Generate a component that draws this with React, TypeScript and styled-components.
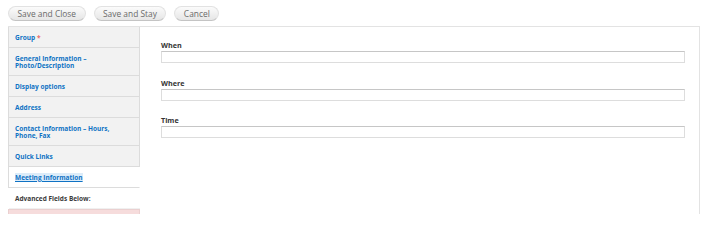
import React from 'react';
import styled, { createGlobalStyle } from 'styled-components';

const GlobalStyle = createGlobalStyle`
  html, body {
    margin: 0;
    padding: 0;
    background: #ffffff;
  }
  body {
    font-family: 'Open Sans', 'DejaVu Sans', sans-serif;
    color: #333333;
  }
`;

const Page = styled.div`
  padding: 6px 8px 0 8px;
  width: 708px;
  box-sizing: border-box;
`;

const Actions = styled.div`
  display: flex;
  gap: 8px;
  height: 15px;
  margin-bottom: 5px;
`;

const Button = styled.button`
  height: 15px;
  padding: 0 8.5px;
  border: 1px solid #e2e2e2;
  border-bottom-color: #c4c4c4;
  border-radius: 10px;
  background: linear-gradient(#fbfbfb, #e6e6e6);
  color: #6a6a6a;
  font-family: 'Open Sans', 'DejaVu Sans', sans-serif;
  font-size: 8.4px;
  line-height: 13px;
  box-sizing: border-box;
  cursor: pointer;
`;

const Panel = styled.div`
  display: flex;
  border-top: 1px solid #e3e3e3;
  border-right: 1px solid #e3e3e3;
  height: 187px;
`;

const Tabs = styled.ul`
  list-style: none;
  margin: 0;
  padding: 0;
  width: 132px;
  flex: none;
`;

const Tab = styled.li<{ $active?: boolean }>`
  padding: 6.5px 6px;
  background: ${p => (p.$active ? '#ffffff' : '#f2f2f2')};
  border-left: 1px solid #dcdcdc;
  border-right: 1px solid ${p => (p.$active ? 'transparent' : '#dcdcdc')};
  border-bottom: 1px solid #dcdcdc;
  font-size: 6.5px;
  line-height: 7px;
  font-weight: 700;
`;

const TabLink = styled.a<{ $active?: boolean }>`
  color: #0f72c4;
  text-decoration: ${p => (p.$active ? 'underline' : 'none')};
  background: ${p => (p.$active ? '#dcecf9' : 'transparent')};
`;

const Required = styled.span`
  color: #ea6b6b;
  margin-left: 2px;
`;

const Note = styled.li`
  padding: 6.5px 6px;
  border-bottom: 1px solid #f0f0f0;
  font-size: 6.5px;
  line-height: 7px;
  font-weight: 700;
  color: #3a3a3a;
  margin-left: 1px;
`;

const ErrorStrip = styled.li`
  height: 4px;
  background: #f6dcdc;
  border: 1px solid #ead0d0;
  border-bottom: none;
`;

const Content = styled.div`
  flex: 1;
  padding: 13px 14px 0 21px;
  display: flex;
  flex-direction: column;
  gap: 14.5px;
`;

const Field = styled.div`
  display: flex;
  flex-direction: column;
`;

const Label = styled.label`
  font-size: 7.2px;
  line-height: 10px;
  font-weight: 700;
  color: #333333;
  margin-bottom: 1px;
`;

const Input = styled.input`
  height: 12px;
  box-sizing: border-box;
  border: 1px solid #dddddd;
  border-top-color: #c6c6c6;
  padding: 0 3px;
  font-size: 8px;
  outline: none;
`;

const tabs = [
  { label: 'Group', required: true },
  { label: 'General Information – Photo/Description' },
  { label: 'Display options' },
  { label: 'Address' },
  { label: 'Contact Information – Hours, Phone, Fax' },
  { label: 'Quick Links' },
  { label: 'Meeting Information', active: true },
];

export default function App() {
  return (
    <Page>
      <GlobalStyle />
      <Actions>
        <Button>Save and Close</Button>
        <Button>Save and Stay</Button>
        <Button>Cancel</Button>
      </Actions>
      <Panel>
        <Tabs>
          {tabs.map(t => (
            <Tab key={t.label} $active={t.active}>
              <TabLink href="#" $active={t.active}>{t.label}</TabLink>
              {t.required && <Required>*</Required>}
            </Tab>
          ))}
          <Note>Advanced Fields Below:</Note>
          <ErrorStrip />
        </Tabs>
        <Content>
          {['When', 'Where', 'Time'].map(name => (
            <Field key={name}>
              <Label>{name}</Label>
              <Input type="text" />
            </Field>
          ))}
        </Content>
      </Panel>
    </Page>
  );
}
